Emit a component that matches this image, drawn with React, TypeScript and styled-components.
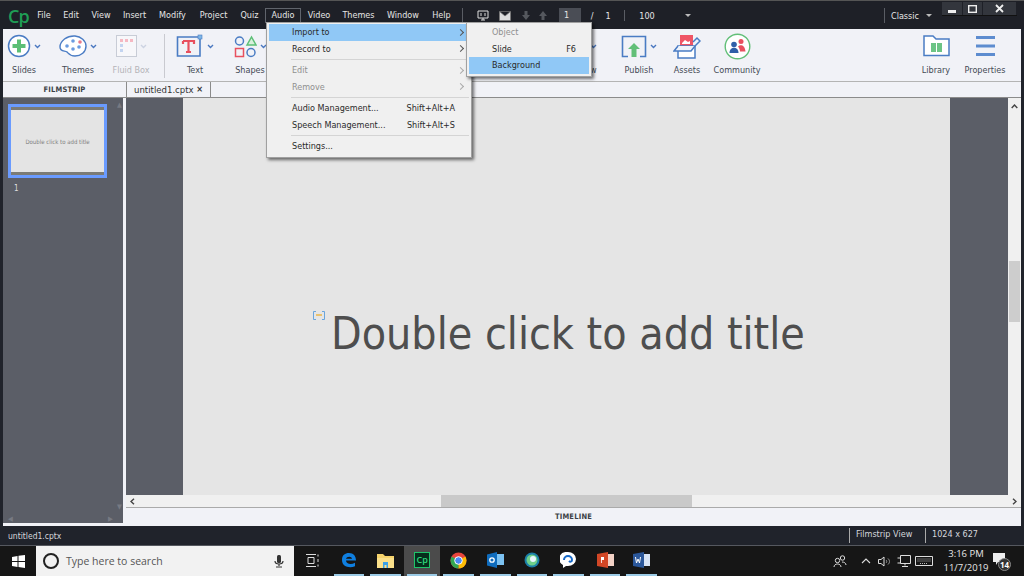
import React from "react";
import styled, { createGlobalStyle } from "styled-components";

const UI = `"DejaVu Sans", "Noto Sans", sans-serif`;

const Global = createGlobalStyle`
  html, body { margin: 0; padding: 0; width: 1024px; height: 576px; overflow: hidden; background: #000; }
  #root { width: 1024px; height: 576px; }
  * { box-sizing: border-box; }
`;

const Page = styled.div`
  position: relative;
  width: 1024px;
  height: 576px;
  display: flex;
  flex-direction: column;
  font-family: ${UI};
  font-stretch: condensed;
  font-size: 9px;
  color: #333;
  background: #20232b;
  overflow: hidden;
`;

/* ---------- title bar ---------- */
const TitleBar = styled.div`
  height: 29px;
  flex: none;
  display: flex;
  align-items: center;
  padding-top: 1px;
  background: #1e2027;
  border-top: 1px solid #555;
  color: #e6e6e6;
`;
const Logo = styled.div`
  width: 31px;
  padding-left: 8px;
  font: 600 18px "Open Sans", sans-serif;
  font-stretch: normal;
  color: #1f9d55;
  letter-spacing: -0.8px;
`;
const MenuLabel = styled.div<{ $w: number; $active?: boolean }>`
  width: ${(p) => p.$w}px;
  height: 15px;
  line-height: 13px;
  text-align: center;
  border: 1px solid ${(p) => (p.$active ? "#60646c" : "transparent")};
`;
const Gap = styled.div<{ $w: number }>`
  width: ${(p) => p.$w}px;
  flex: none;
`;
const VLine = styled.div<{ $h: number }>`
  width: 1px;
  height: ${(p) => p.$h}px;
  background: #5a5d64;
  flex: none;
`;
const PageInput = styled.div`
  width: 22px;
  height: 15px;
  background: #4a4d55;
  line-height: 15px;
  padding-left: 5px;
  flex: none;
`;
const BarText = styled.div<{ $w: number }>`
  width: ${(p) => p.$w}px;
  text-align: center;
  flex: none;
`;
const Caret = styled.div`
  width: 0;
  height: 0;
  border-left: 3px solid transparent;
  border-right: 3px solid transparent;
  border-top: 3px solid #bbb;
  flex: none;
`;
const WinControls = styled.div`
  position: absolute;
  top: 2px;
  left: 942px;
  width: 75px;
  height: 14px;
  display: flex;
  background: #33363d;
  border-bottom: 1px solid #111;
`;
const WinBtn = styled.div<{ $w: number }>`
  width: ${(p) => p.$w}px;
  display: flex;
  align-items: center;
  justify-content: center;
  border-right: 1px solid #1e2027;
`;

/* ---------- ribbon ---------- */
const Ribbon = styled.div`
  height: 53px;
  flex: none;
  display: flex;
  padding: 3px 0 0 0;
  margin: 0 3px;
  background: #f1f2f7;
  border-bottom: 1px solid #b4b4b4;
`;
const Tool = styled.div<{ $w: number; $off?: boolean }>`
  width: ${(p) => p.$w}px;
  flex: none;
  display: flex;
  flex-direction: column;
  align-items: center;
  color: ${(p) => (p.$off ? "#b4b4b8" : "#444a55")};
  white-space: nowrap;
`;
const ToolIcon = styled.div`
  height: 28px;
  display: flex;
  align-items: center;
  gap: 3px;
`;
const ToolLabel = styled.div`
  margin-top: 3px;
  line-height: 14px;
`;
const RibbonRule = styled.div`
  width: 1px;
  height: 44px;
  margin: 2px 5px 0 7px;
  background: #c9cad0;
  flex: none;
`;

/* ---------- tabs ---------- */
const TabRow = styled.div`
  height: 16px;
  flex: none;
  display: flex;
  margin: 0 3px;
  background: #f1f2f7;
  border-bottom: 1px solid #8b8b8b;
`;
const StripHead = styled.div`
  width: 123px;
  font-size: 7.5px;
  font-weight: bold;
  letter-spacing: 0.2px;
  text-align: center;
  line-height: 16px;
  color: #3c3f46;
`;
const Tab = styled.div`
  width: 85px;
  display: flex;
  justify-content: space-between;
  padding: 0 7px;
  line-height: 15px;
  border-left: 1px solid #8b8b8b;
  border-right: 1px solid #8b8b8b;
  color: #333;
  font-size: 9.5px;
`;
const Close = styled.span`
  font-size: 9px;
  font-weight: bold;
`;

/* ---------- main ---------- */
const Main = styled.div`
  flex: 1;
  display: flex;
  margin: 0 3px;
  min-height: 0;
  background: #f1f2f7;
`;
const Filmstrip = styled.div`
  width: 120px;
  flex: none;
  position: relative;
  padding: 6px 0 0 5px;
  background: #5b5e67;
  margin-bottom: 3px;
  color: #ddd;
`;
const Thumb = styled.div`
  width: 99px;
  height: 74px;
  display: flex;
  flex-direction: column;
  border: 3px solid #6a9bff;
  background: #e4e4e4;
`;
const ThumbBar = styled.div`
  height: 3px;
  background: #7b7b76;
  flex: none;
`;
const ThumbText = styled.div`
  flex: 1;
  display: flex;
  align-items: center;
  justify-content: center;
  font-size: 6px;
  color: #808080;
`;
const ThumbNo = styled.div`
  margin: 6px 0 0 6px;
  font-size: 8px;
`;
const ScrollMark = styled.div<{ $x: number; $y: number }>`
  position: absolute;
  left: ${(p) => p.$x}px;
  top: ${(p) => p.$y}px;
  color: #777a83;
  font-size: 7px;
  line-height: 8px;
`;
const WorkColumn = styled.div`
  flex: 1;
  margin-left: 3px;
  display: flex;
  flex-direction: column;
  min-width: 0;
`;
const StageRow = styled.div`
  height: 397px;
  flex: none;
  display: flex;
`;
const Pasteboard = styled.div`
  flex: 1;
  display: flex;
  padding-left: 57px;
  padding-right: 58px;
  background: #5b5e67;
`;
const Slide = styled.div`
  flex: 1;
  display: flex;
  align-items: flex-start;
  padding: 210px 0 0 130px;
  background: #e5e5e5;
`;
const Marker = styled.svg`
  flex: none;
  margin: 3px 6px 0 0;
`;
const Title = styled.div`
  font-size: 44.3px;
  line-height: 52px;
  color: #4e4e4e;
  white-space: nowrap;
`;
const VScroll = styled.div`
  width: 13px;
  flex: none;
  display: flex;
  flex-direction: column;
  align-items: center;
  background: #f0f0f0;
`;
const ScrollArrow = styled.div`
  height: 16px;
  display: flex;
  align-items: center;
  justify-content: center;
  flex: none;
`;
const VThumb = styled.div`
  width: 11px;
  height: 61px;
  margin-top: 147px;
  background: #cdcdcd;
`;
const HScroll = styled.div`
  height: 13px;
  flex: none;
  display: flex;
  align-items: center;
  justify-content: space-between;
  position: relative;
  padding: 0 4px;
  background: #f0f0f0;
  border-bottom: 1px solid #aaa;
`;
const HThumb = styled.div`
  position: absolute;
  left: 315px;
  width: 251px;
  top: 0;
  height: 12px;
  background: #c9c9c9;
`;
const Timeline = styled.div`
  flex: 1;
  font-size: 7.5px;
  font-weight: bold;
  letter-spacing: 0.2px;
  text-align: center;
  line-height: 18px;
  color: #3c3f46;
  border-bottom: 1px solid #999;
`;

/* ---------- status ---------- */
const Status = styled.div`
  height: 20px;
  flex: none;
  display: flex;
  align-items: center;
  background: #20232b;
  border-bottom: 1px solid #55585f;
  color: #d5d7dc;
`;
const StatusFile = styled.div`
  flex: 1;
  padding-left: 8px;
  font-size: 8.5px;
`;
const StatusCell = styled.div<{ $w: number }>`
  width: ${(p) => p.$w}px;
  height: 15px;
  line-height: 13px;
  padding-left: 6px;
  border-left: 1px solid #aaa;
`;

/* ---------- taskbar ---------- */
const Taskbar = styled.div`
  height: 30px;
  flex: none;
  display: flex;
  background: #161616;
  color: #eee;
`;
const StartBtn = styled.div`
  width: 36px;
  flex: none;
  display: flex;
  align-items: center;
  justify-content: center;
`;
const Search = styled.div`
  width: 258px;
  flex: none;
  display: flex;
  align-items: center;
  gap: 6px;
  padding: 0 10px 0 6px;
  background: #f2f2f2;
  color: #555;
  font: 10.5px "Open Sans", sans-serif;
`;
const SearchText = styled.div`
  flex: 1;
`;
const Slot = styled.div<{ $on?: boolean; $active?: boolean }>`
  width: 36.6px;
  flex: none;
  position: relative;
  display: flex;
  align-items: center;
  justify-content: center;
  padding-bottom: 2px;
  background: ${(p) => (p.$active ? "#4b4b4b" : "transparent")};
  &::after {
    content: "";
    display: ${(p) => (p.$on ? "block" : "none")};
    position: absolute;
    bottom: 0;
    left: 3px;
    right: 3px;
    height: 2px;
    background: #9ccbe6;
  }
`;
const CpTile = styled.div`
  width: 16px;
  height: 16px;
  background: #062e1c;
  border: 1.5px solid #1fc46a;
  color: #2fd67c;
  font: 600 9px/13px "Open Sans", sans-serif;
  text-align: center;
`;
const Tray = styled.div`
  flex: 1;
  display: flex;
  align-items: center;
  justify-content: flex-end;
  padding-right: 17px;
`;
const Clock = styled.div`
  width: 48px;
  text-align: center;
  font: 9.5px/14px "Open Sans", sans-serif;
  margin: 0 3px 0 3px;
  color: #e8e8e8;
`;
const Bell = styled.div`
  position: relative;
  width: 14px;
  height: 16px;
`;
const Badge = styled.div`
  position: absolute;
  left: 5px;
  top: 5px;
  width: 13px;
  height: 13px;
  border-radius: 50%;
  background: #333;
  border: 1px solid #888;
  text-align: center;
  font: bold 8px/11px "Open Sans", sans-serif;
  color: #fff;
`;

/* ---------- menus ---------- */
const Popup = styled.div<{ $x: number; $w: number; $h: number }>`
  position: absolute;
  left: ${(p) => p.$x}px;
  top: 22px;
  width: ${(p) => p.$w}px;
  height: ${(p) => p.$h}px;
  padding: 1px 2px 2px;
  background: #f0f0f0;
  border: 1px solid #a0a0a0;
  box-shadow: 2px 2px 3px rgba(0, 0, 0, 0.55);
  color: #2a2a2a;
`;
const Row = styled.div<{ $hot?: boolean; $off?: boolean }>`
  height: 16.5px;
  display: flex;
  align-items: center;
  padding: 0 3px 0 23px;
  background: ${(p) => (p.$hot ? "#90c8f6" : "transparent")};
  color: ${(p) => (p.$off ? "#8f8f8f" : "#2a2a2a")};
  white-space: nowrap;
`;
const RowLabel = styled.div`
  flex: 1;
`;
const Shortcut = styled.div<{ $r: number }>`
  margin-right: ${(p) => p.$r}px;
`;
const Arrow = styled.div<{ $off?: boolean }>`
  width: 5px;
  height: 5px;
  margin-right: 3px;
  border-top: 1px solid ${(p) => (p.$off ? "#aaa" : "#555")};
  border-right: 1px solid ${(p) => (p.$off ? "#aaa" : "#555")};
  transform: rotate(45deg);
`;
const Sep = styled.div`
  height: 1px;
  margin: 2px 0 2px 22px;
  background: #d4d4d4;
`;

const Chevron = ({ off }: { off?: boolean }) => (
  <svg width="7" height="5" viewBox="0 0 7 5">
    <path d="M1 1l2.5 2.5L6 1" fill="none" stroke={off ? "#ccd3e2" : "#4a78c0"} strokeWidth="1.4" />
  </svg>
);

const menus: [string, number][] = [
  ["File", 26], ["Edit", 28], ["View", 32], ["Insert", 35], ["Modify", 41], ["Project", 41],
  ["Quiz", 31], ["Audio", 36], ["Video", 36], ["Themes", 43], ["Window", 46], ["Help", 31],
];

export default function App() {
  return (
    <Page>
      <Global />
      <TitleBar>
        <Logo>Cp</Logo>
        {menus.map(([m, w]) => (
          <MenuLabel key={m} $w={w} $active={m === "Audio"}>{m}</MenuLabel>
        ))}
        <Gap $w={5} />
        <VLine $h={15} />
        <Gap $w={14} />
        <svg width="12" height="11" viewBox="0 0 12 11">
          <path d="M1 1h10v7H1zM4 10h4M6 8v2M4 3v3M8 3v3" fill="none" stroke="#ddd" />
        </svg>
        <Gap $w={10} />
        <svg width="12" height="10" viewBox="0 0 12 10">
          <path d="M.5.5h11v9H.5zM.5.5L6 5l5.5-4.500" fill="#ddd" stroke="#777" strokeWidth=".7" />
        </svg>
        <Gap $w={11} />
        <svg width="8" height="9" viewBox="0 0 8 9"><path d="M2.500 0h3v4H8L4 9 0 4h2.500z" fill="#55585e" /></svg>
        <Gap $w={9} />
        <svg width="8" height="9" viewBox="0 0 8 9"><path d="M2.500 9h3V5H8L4 0 0 5h2.500z" fill="#55585e" /></svg>
        <Gap $w={12} />
        <PageInput>1</PageInput>
        <BarText $w={22}>/</BarText>
        <BarText $w={10}>1</BarText>
        <Gap $w={11} />
        <VLine $h={11} />
        <BarText $w={44}>100</BarText>
        <Gap $w={16} />
        <Caret />
        <Gap $w={193} />
        <VLine $h={15} />
        <Gap $w={6} />
        <BarText $w={27}>Classic</BarText>
        <Gap $w={8} />
        <Caret />
      </TitleBar>
      <WinControls>
        <WinBtn $w={21}><svg width="8" height="8"><rect y="5" width="8" height="3" fill="#eee" /></svg></WinBtn>
        <WinBtn $w={20}><svg width="9" height="8"><rect x=".7" y=".7" width="7.600" height="6.600" fill="none" stroke="#eee" strokeWidth="1.400" /></svg></WinBtn>
        <WinBtn $w={34}><svg width="9" height="9"><path d="M1 1l7 7M8 1L1 8" stroke="#eee" strokeWidth="1.800" /></svg></WinBtn>
      </WinControls>

      <Ribbon>
        <Tool $w={42}>
          <ToolIcon>
            <svg width="24" height="24" viewBox="0 0 24 24">
              <circle cx="12" cy="12" r="10.500" fill="#fff" stroke="#4a7cc4" strokeWidth="1.500" />
              <path d="M12 5.500v13M5.500 12h13" stroke="#5cbf76" strokeWidth="4" />
            </svg>
            <Chevron />
          </ToolIcon>
          <ToolLabel>Slides</ToolLabel>
        </Tool>
        <Gap $w={6} />
        <Tool $w={54}>
          <ToolIcon>
            <svg width="28" height="22" viewBox="0 0 28 22">
              <path d="M16 1C8 .5 1 6 1 12c0 5 5 3.500 7 5 2 2 3 4 8 4 6 0 11-4 11-10 0-5-5-9.500-11-10z" fill="#fff" stroke="#4a7cc4" strokeWidth="1.400" />
              <circle cx="8" cy="11" r="1.800" fill="#6a9be0" /><circle cx="14" cy="14" r="1.800" fill="#6a9be0" />
              <circle cx="20" cy="12" r="1.800" fill="#6a9be0" /><circle cx="21" cy="7" r="1.800" fill="#e87a8a" />
              <circle cx="14" cy="6" r="1.800" fill="#6a9be0" />
            </svg>
            <Chevron />
          </ToolIcon>
          <ToolLabel>Themes</ToolLabel>
        </Tool>
        <Tool $w={52} $off>
          <ToolIcon>
            <svg width="21" height="22" viewBox="0 0 21 22">
              <rect x=".5" y=".5" width="20" height="21" fill="#f7f7fa" stroke="#c8ccd6" />
              <path d="M4 4h3v3H4zM9 4h3v3H9zM14 4h3v3h-3z" fill="#f5b8c2" />
              <path d="M4 9h3v3H4zM4 14h3v3H4z" fill="#c3d4f0" />
            </svg>
            <Chevron off />
          </ToolIcon>
          <ToolLabel>Fluid Box</ToolLabel>
        </Tool>
        <RibbonRule />
        <Tool $w={50}>
          <ToolIcon>
            <svg width="28" height="24" viewBox="0 0 28 24">
              <path d="M24 5v17H1.500V3H22" fill="none" stroke="#4a7cc4" strokeWidth="1.600" />
              <rect x="22" y="1" width="4" height="4" fill="#7fb7e6" stroke="#4a7cc4" strokeWidth=".6" />
              <path d="M7 7h11v3M7 7v3M12.500 7v11M10 18h5" fill="none" stroke="#e8505f" strokeWidth="2.200" />
            </svg>
            <Chevron />
          </ToolIcon>
          <ToolLabel>Text</ToolLabel>
        </Tool>
        <Gap $w={5} />
        <Tool $w={50}>
          <ToolIcon>
            <svg width="23" height="23" viewBox="0 0 23 23">
              <circle cx="5.500" cy="6" r="4" fill="none" stroke="#4a7cc4" strokeWidth="1.500" />
              <path d="M13 10l4.500-8 4.500 8z" fill="#d9f0dc" stroke="#5cbf76" strokeWidth="1.500" />
              <rect x="1.500" y="13.500" width="8" height="8" fill="none" stroke="#e8505f" strokeWidth="1.500" />
              <circle cx="17" cy="17.500" r="4" fill="none" stroke="#4a7cc4" strokeWidth="1.500" />
            </svg>
            <Chevron />
          </ToolIcon>
          <ToolLabel>Shapes</ToolLabel>
        </Tool>
        <Gap $w={284} />
        <Tool $w={44}>
          <ToolIcon>
            <svg width="22" height="22" viewBox="0 0 22 22"><circle cx="11" cy="11" r="9" fill="none" stroke="#4a7cc4" strokeWidth="1.500" /></svg>
            <Chevron />
          </ToolIcon>
          <ToolLabel>Preview</ToolLabel>
        </Tool>
        <Gap $w={12} />
        <Tool $w={48}>
          <ToolIcon>
            <svg width="26" height="23" viewBox="0 0 26 23">
              <path d="M7 21.500H1.500V1.500h23v20H19" fill="none" stroke="#4a7cc4" strokeWidth="1.600" />
              <path d="M13 8l6 6h-3.500v8h-5v-8H7z" fill="#62bf78" />
            </svg>
            <Chevron />
          </ToolIcon>
          <ToolLabel>Publish</ToolLabel>
        </Tool>
        <Tool $w={48}>
          <ToolIcon>
            <svg width="28" height="25" viewBox="0 0 28 25">
              <rect x="7" y="1" width="13" height="11" fill="#ef5566" />
              <path d="M9 9l3-3 3 2 2-1v3H9z" fill="#fff" />
              <path d="M5 12h17v12H5z" fill="#fff" stroke="#4a7cc4" strokeWidth="1.500" />
              <path d="M5 12L1 17h17l4-5M22 12l5-5-3-3-4 4" fill="#eef3fb" stroke="#4a7cc4" strokeWidth="1.500" />
            </svg>
          </ToolIcon>
          <ToolLabel>Assets</ToolLabel>
        </Tool>
        <Tool $w={52}>
          <ToolIcon>
            <svg width="27" height="27" viewBox="0 0 27 27">
              <circle cx="13.500" cy="13.500" r="12.300" fill="#fff" stroke="#62bf78" strokeWidth="1.400" />
              <circle cx="10" cy="11.500" r="2.800" fill="#2f5fa8" /><path d="M5.500 20c0-7 9-7 9 0z" fill="#2f5fa8" />
              <circle cx="17" cy="8.500" r="2.500" fill="#e8505f" /><path d="M14 13.500c2-2.500 7-2 7.500 5H16c0-2-1-4-2-5z" fill="#e8505f" />
            </svg>
          </ToolIcon>
          <ToolLabel>Community</ToolLabel>
        </Tool>
        <Gap $w={151} />
        <Tool $w={44}>
          <ToolIcon>
            <svg width="27" height="22" viewBox="0 0 27 22">
              <path d="M1 20.500V1h9l3 3h13v16.500z" fill="#fff" stroke="#4a7cc4" strokeWidth="1.500" />
              <path d="M8 8h5v9H8zM14 8h5v9h-5z" fill="#6cc485" />
            </svg>
          </ToolIcon>
          <ToolLabel>Library</ToolLabel>
        </Tool>
        <Tool $w={54}>
          <ToolIcon>
            <svg width="19" height="20" viewBox="0 0 19 20">
              <path d="M0 1.500h19M0 10h19M0 18.500h19" stroke="#5d8ccf" strokeWidth="3" />
            </svg>
          </ToolIcon>
          <ToolLabel>Properties</ToolLabel>
        </Tool>
      </Ribbon>

      <TabRow>
        <StripHead>FILMSTRIP</StripHead>
        <Tab>untitled1.cptx<Close>×</Close></Tab>
      </TabRow>

      <Main>
        <Filmstrip>
          <Thumb>
            <ThumbBar />
            <ThumbText>Double click to add title</ThumbText>
            <ThumbBar />
          </Thumb>
          <ThumbNo>1</ThumbNo>
          <ScrollMark $x={114} $y={3}>▲</ScrollMark>
          <ScrollMark $x={114} $y={405}>▼</ScrollMark>
          <ScrollMark $x={5} $y={417}>◀</ScrollMark>
          <ScrollMark $x={105} $y={417}>▶</ScrollMark>
        </Filmstrip>
        <WorkColumn>
          <StageRow>
            <Pasteboard>
              <Slide>
                <Marker width="12" height="9" viewBox="0 0 12 9">
                  <path d="M3 .5H.5v8H3M9 .5h2.500v8H9" fill="none" stroke="#6aa5dc" />
                  <path d="M3 4h6" stroke="#eba91e" strokeWidth="1.200" />
                </Marker>
                <Title>Double click to add title</Title>
              </Slide>
            </Pasteboard>
            <VScroll>
              <ScrollArrow>
                <svg width="7" height="5" viewBox="0 0 7 5"><path d="M.7 4l2.800-3 2.800 3" fill="none" stroke="#444" strokeWidth="1.400" /></svg>
              </ScrollArrow>
              <VThumb />
            </VScroll>
          </StageRow>
          <HScroll>
            <HThumb />
            <svg width="5" height="7" viewBox="0 0 5 7"><path d="M4 .7L1 3.500 4 6.300" fill="none" stroke="#444" strokeWidth="1.400" /></svg>
            <svg width="5" height="7" viewBox="0 0 5 7"><path d="M1 .7l3 2.800-3 2.800" fill="none" stroke="#444" strokeWidth="1.400" /></svg>
          </HScroll>
          <Timeline>TIMELINE</Timeline>
        </WorkColumn>
      </Main>

      <Status>
        <StatusFile>untitled1.cptx</StatusFile>
        <StatusCell $w={76}>Filmstrip View</StatusCell>
        <StatusCell $w={99}>1024 x 627</StatusCell>
      </Status>

      <Taskbar>
        <StartBtn>
          <svg width="13" height="13" viewBox="0 0 13 13">
            <path d="M0 2l5.500-1v5H0zM6.500.8L13 0v6H6.500zM0 7h5.500v5L0 11zM6.500 7H13v6l-6.500-.9z" fill="#fff" />
          </svg>
        </StartBtn>
        <Search>
          <svg width="18" height="18" viewBox="0 0 18 18"><circle cx="9" cy="9" r="7" fill="none" stroke="#222" strokeWidth="2" /></svg>
          <SearchText>Type here to search</SearchText>
          <svg width="10" height="13" viewBox="0 0 10 13">
            <rect x="3" y="0" width="4" height="8" rx="1.500" fill="#333" />
            <path d="M1 6c0 4 8 4 8 0M5 9v2M2 12h6" fill="none" stroke="#333" strokeWidth="1.200" />
          </svg>
        </Search>
        <Slot>
          <svg width="13" height="13" viewBox="0 0 13 13">
            <path d="M0 .5h10M0 12.500h10M2 3.500h6v6H2z" fill="none" stroke="#ddd" />
            <path d="M12 .5v2M12 5v3M12 10.500v2" stroke="#ddd" />
          </svg>
        </Slot>
        <Slot $on>
          <svg width="16" height="16" viewBox="0 0 16 16">
            <path d="M1 8c0-5 3-7 7-7 4.500 0 7 3 7 7.500H5c0 3.500 5 4.500 9 2.300v3.500C8 16.500 1 14.500 1 8zm4-1.200h6C11 4 5.500 4 5 6.800z" fill="#0f7fe0" />
          </svg>
        </Slot>
        <Slot $on>
          <svg width="17" height="15" viewBox="0 0 17 15">
            <path d="M0 1h6l2 2h9v12H0z" fill="#f6d36b" />
            <path d="M0 5h17v10H0z" fill="#fbe08a" />
            <path d="M6 9h5v6H9.500v-3h-2v3H6z" fill="#3aa0e8" />
          </svg>
        </Slot>
        <Slot $on $active>
          <CpTile>Cp</CpTile>
        </Slot>
        <Slot $on>
          <svg width="17" height="17" viewBox="0 0 17 17">
            <circle cx="8.500" cy="8.500" r="8" fill="#e8453c" />
            <path d="M8.500 8.500L15.400 4.500A8 8 0 0 1 8.500 16.500z" fill="#fbbc05" />
            <path d="M8.500 8.500L8.500 16.500A8 8 0 0 1 1.600 4.500z" fill="#34a853" />
            <circle cx="8.500" cy="8.500" r="3.800" fill="#4a8af4" stroke="#fff" />
          </svg>
        </Slot>
        <Slot $on>
          <svg width="17" height="16" viewBox="0 0 17 16">
            <path d="M7 2h10v11H7z" fill="#7cc2f2" />
            <path d="M0 2.500L10 0v16L0 13.500z" fill="#0f6cbd" />
            <circle cx="5" cy="8" r="2.200" fill="none" stroke="#fff" strokeWidth="1.300" />
          </svg>
        </Slot>
        <Slot $on>
          <svg width="16" height="16" viewBox="0 0 16 16">
            <circle cx="8" cy="8" r="7.500" fill="#1b7fa8" />
            <circle cx="8" cy="8" r="5.500" fill="#6fd08a" />
            <circle cx="9" cy="7" r="3" fill="#e8f6ff" />
          </svg>
        </Slot>
        <Slot $on>
          <svg width="16" height="16" viewBox="0 0 16 16">
            <path d="M8 0a8 7 0 0 1 0 14H6l-3 2v-3A8 7 0 0 1 8 0z" fill="#fff" />
            <path d="M4 8a4 4 0 1 1 8 0c0 2-2 2-3 1" fill="none" stroke="#1668c7" strokeWidth="2" />
          </svg>
        </Slot>
        <Slot $on>
          <svg width="17" height="16" viewBox="0 0 17 16">
            <path d="M8 2h9v12H8z" fill="#f3d2c6" />
            <path d="M0 2l11-2v16L0 14z" fill="#d24726" />
            <path d="M4 5h3v3H4.800v3H4z" fill="#fff" />
          </svg>
        </Slot>
        <Slot $on>
          <svg width="17" height="16" viewBox="0 0 17 16">
            <path d="M8 2h9v12H8z" fill="#d7e3f5" />
            <path d="M0 2l11-2v16L0 14z" fill="#2b579a" />
            <path d="M2.500 5l1 6 1.500-4 1.500 4 1-6" fill="none" stroke="#fff" />
          </svg>
        </Slot>
        <Tray>
          <svg width="14" height="13" viewBox="0 0 14 13">
            <circle cx="9.500" cy="3" r="2.200" fill="none" stroke="#ddd" /><circle cx="4.500" cy="5.500" r="2.200" fill="none" stroke="#ddd" />
            <path d="M1 12c0-4 7-4 7 0M9 7c2 0 4 1 4 3" fill="none" stroke="#ddd" />
          </svg>
          <Gap $w={14} />
          <svg width="10" height="6" viewBox="0 0 10 6"><path d="M1 5l4-4 4 4" fill="none" stroke="#ddd" strokeWidth="1.100" /></svg>
          <Gap $w={7} />
          <svg width="13" height="11" viewBox="0 0 13 11">
            <path d="M.5 3.500h2.500L6 1v9L3 7.500H.5z" fill="none" stroke="#ddd" />
            <path d="M8 4c1 1 1 2 0 3M10 2.500c2 2 2 4 0 6" fill="none" stroke="#999" />
          </svg>
          <Gap $w={6} />
          <svg width="14" height="12" viewBox="0 0 14 12">
            <path d="M3.500.5h10v8h-10zM8 8.500v2M5 11.500h6M.5 3h3v5h-3" fill="none" stroke="#ddd" />
          </svg>
          <Gap $w={4} />
          <svg width="18" height="10" viewBox="0 0 18 10">
            <path d="M.5.500h17v9H.5z" fill="none" stroke="#ddd" />
            <path d="M2.500 3h13M2.500 5h13M5 7.500h8" stroke="#bbb" strokeDasharray="1 1" />
          </svg>
          <Gap $w={6} />
          <Clock>3:16 PM<br />11/7/2019</Clock>
          <Bell>
            <svg width="12" height="12" viewBox="0 0 12 12"><path d="M0 0h12v9H5l-2 3V9H0z" fill="#eee" /></svg>
            <Badge>14</Badge>
          </Bell>
        </Tray>
      </Taskbar>

      <Popup $x={266} $w={206} $h={136}>
        <Row $hot><RowLabel>Import to</RowLabel><Arrow /></Row>
        <Row><RowLabel>Record to</RowLabel><Arrow /></Row>
        <Sep />
        <Row $off><RowLabel>Edit</RowLabel><Arrow $off /></Row>
        <Row $off><RowLabel>Remove</RowLabel><Arrow $off /></Row>
        <Sep />
        <Row><RowLabel>Audio Management...</RowLabel><Shortcut $r={11}>Shift+Alt+A</Shortcut></Row>
        <Row><RowLabel>Speech Management...</RowLabel><Shortcut $r={11}>Shift+Alt+S</Shortcut></Row>
        <Sep />
        <Row><RowLabel>Settings...</RowLabel></Row>
      </Popup>
      <Popup $x={466} $w={126} $h={55}>
        <Row $off><RowLabel>Object</RowLabel></Row>
        <Row><RowLabel>Slide</RowLabel><Shortcut $r={10}>F6</Shortcut></Row>
        <Row $hot><RowLabel>Background</RowLabel></Row>
      </Popup>
    </Page>
  );
}
